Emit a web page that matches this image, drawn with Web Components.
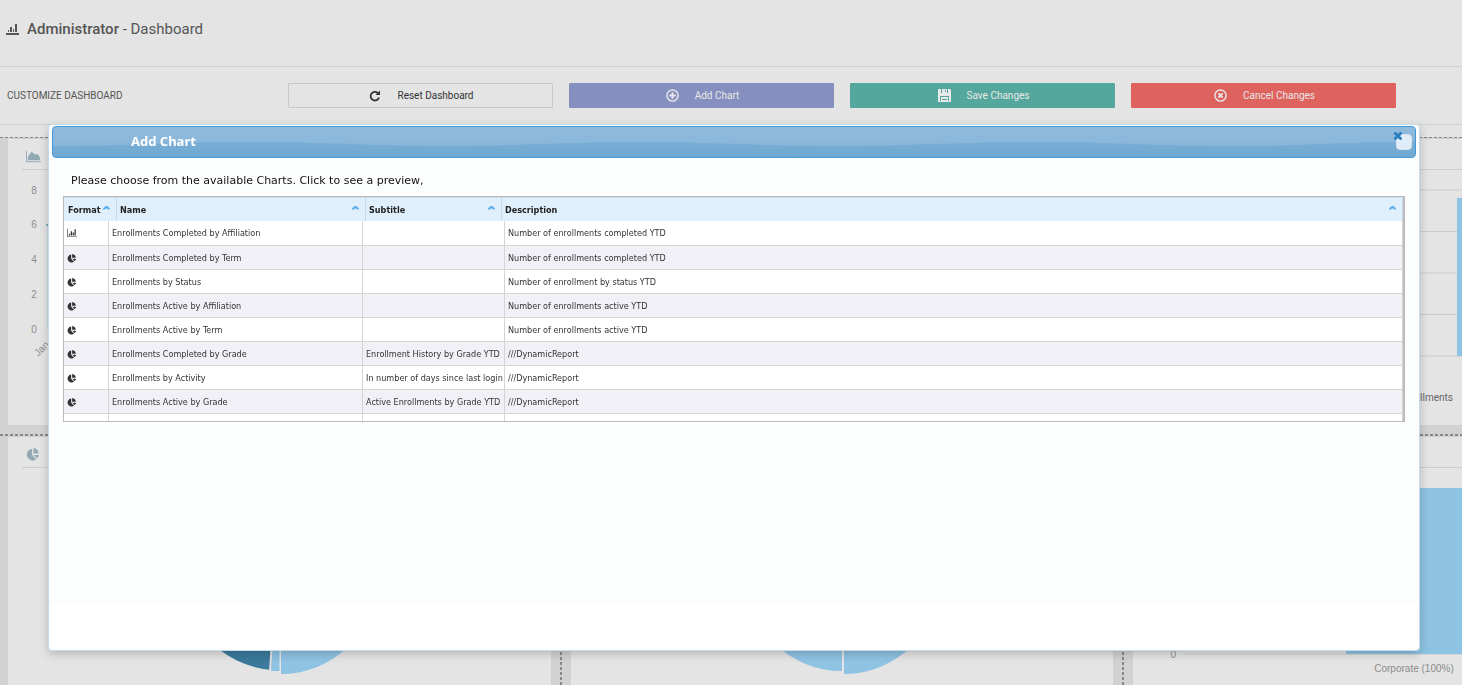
<!DOCTYPE html>
<html lang="en">
<head>
<meta charset="utf-8">
<title>Administrator - Dashboard</title>
<style>
  html, body { height: 100%; }
  body {
    margin: 0;
    overflow: hidden;
    background: #e4e4e4;
    color: #555;
    font-family: Roboto, Arial, sans-serif;
  }
</style>
</head>
<body>
<dashboard-page></dashboard-page>

<script>
// small icon set shared by all the elements
const ICONS = {
  bar: ['0 0 16 14', '<path d="M0 0h1v12h15v1H0zM3 8h2v3H3zM6 4h2v7H6zM9 6h2v5H9zM12 1h2v10h-2z"/>'],
  stats: ['0 0 13 11', '<path d="M0 9h13v2H0zM2 6h1v2H2zM4 3h2v5H4zM7 5h1v3H7zM9 0h2v8H9z"/>'],
  pie: ['0 0 14 14', '<path d="M6.500 .8v6.500l4.500 4.800A6.300 6.300 0 1 1 6.500 .8z"/><path d="M8 0a6.200 6.200 0 0 1 5.500 6H8z"/><path d="M8.500 7.500H14a6 6 0 0 1-2 3.800z"/>'],
  area: ['0 0 16 12', '<path d="M0 0h1v11h15v1H0z"/><path d="M2 10V6l4-5 4 3 2-1 3 4v3z"/>'],
  reset: ['0 0 12 12', '<path d="M10 7.500A4.300 4.300 0 1 1 8.800 3" fill="none" stroke="currentColor" stroke-width="1.800"/><path d="M11 0.500v4.500H6.500z"/>'],
  add: ['0 0 14 14', '<circle cx="7" cy="7" r="6" fill="none" stroke="currentColor" stroke-width="1.500"/><path d="M6 3.500h2V6h2.500v2H8v2.500H6V8H3.500V6H6z"/>'],
  save: ['0 0 13 13', '<path fill-rule="evenodd" d="M0 0H12L13 1V13H0zM3 0h1v4H3zM9 0h1v4H9zM7 1h1v2H7zM2 7h9v1H2zM2 8h1v4H2zM10 8h1v4h-1zM4 10h5v1H4z"/>'],
  cancel: ['0 0 14 14', '<circle cx="7" cy="7" r="6" fill="none" stroke="currentColor" stroke-width="1.500"/><path d="M4.800 4.800l4.400 4.400m0-4.400l-4.400 4.400" stroke="currentColor" stroke-width="2"/>'],
  sort: ['0 0 7 4', '<path d="M0 4V3l2-2 1-.5h1L5 1l2 2v1H5L4 3H3L2 4z"/>'],
  close: ['0 0 8 8', '<path d="M0 1l1-1h1l2 2 2-2h1l1 1v1L6 4l2 2v1L7 8H6L4 6 2 8H1L0 7V6l2-2-2-2z"/>']
};

class UiIcon extends HTMLElement {
  constructor() {
    super();
    this.attachShadow({ mode: 'open' });
  }

  connectedCallback() {
    const [box, body] = ICONS[this.getAttribute('name')];
    const size = this.getAttribute('size') || 12;
    this.shadowRoot.innerHTML = `
      <style>
        :host { display: inline-flex; flex: none; vertical-align: middle; }
        svg { display: block; fill: currentColor; }
      </style>
      <svg viewBox="${box}" width="${size}" height="${size}" aria-hidden="true">${body}</svg>`;
  }
}
customElements.define('ui-icon', UiIcon);

class PageHeader extends HTMLElement {
  constructor() {
    super();
    this.attachShadow({ mode: 'open' }).innerHTML = `
      <style>
        :host { display: block; border-bottom: 1px solid #cfcfcf; }
        header { display: flex; align-items: center; gap: 8px; height: 58px; padding: 0 6px 8px; }
        h1 { margin: 0; font-size: 15px; line-height: 20px; font-weight: 400; color: #555; }
      </style>
      <header><ui-icon name="stats" size="13"></ui-icon><h1><slot></slot></h1></header>`;
  }
}
customElements.define('page-header', PageHeader);

class ToolButton extends HTMLElement {
  constructor() {
    super();
    this.attachShadow({ mode: 'open' });
  }

  connectedCallback() {
    this.shadowRoot.innerHTML = `
      <style>
        :host { display: block; }
        button {
          display: flex;
          align-items: center;
          justify-content: center;
          gap: 16px;
          width: 100%;
          height: 25px;
          padding: 0 0 0 2px;
          border: 1px solid var(--edge, transparent);
          border-radius: 1px;
          background: var(--fill, transparent);
          color: var(--ink, #e8e8e8);
          font: 10px Roboto, Arial, sans-serif;
          cursor: pointer;
        }
        :host([kind=add]) { --fill: #8690c0; --edge: #8690c0; }
        :host([kind=save]) { --fill: #54a79d; --edge: #54a79d; }
        :host([kind=cancel]) { --fill: #de625e; --edge: #de625e; }
        :host([kind=reset]) { --edge: #c9c9c9; --ink: #333; }
      </style>
      <button type="button"><ui-icon name="${this.getAttribute('kind')}" size="${this.getAttribute('icon-size') || 13}"></ui-icon><slot></slot></button>`;
  }
}
customElements.define('tool-button', ToolButton);

class ToolBar extends HTMLElement {
  constructor() {
    super();
    this.attachShadow({ mode: 'open' }).innerHTML = `
      <style>
        :host {
          display: grid;
          grid-template-columns: repeat(5, 1fr);
          gap: 16px;
          align-items: center;
          padding: 16px 66px 16px 7px;
          border-bottom: 1px solid #cfcfcf;
        }
        span { font-size: 10px; color: #555; }
      </style>
      <span><slot name="label"></slot></span>
      <slot></slot>`;
  }
}
customElements.define('tool-bar', ToolBar);

class ChartCard extends HTMLElement {
  constructor() {
    super();
    this.attachShadow({ mode: 'open' });
  }

  connectedCallback() {
    const icon = this.getAttribute('icon');
    this.shadowRoot.innerHTML = `
      <style>
        :host { display: block; background: #e4e4e4; overflow: hidden; }
        .head {
          display: flex;
          align-items: center;
          height: 26px;
          margin-left: 14px;
          padding: 4px 4px 0;
          border-bottom: 1px solid #cdcdcd;
          color: #93aab5;
        }
      </style>
      <div class="head">${icon ? `<ui-icon name="${icon}" size="${icon === 'area' ? 15 : 13}"></ui-icon>` : ''}</div>
      <slot></slot>`;
  }
}
customElements.define('chart-card', ChartCard);

const PLOTS = {
  line: `
    <svg viewBox="0 0 543 255" width="543" height="255">
      <g text-anchor="middle">
        <text x="26" y="24">8</text><text x="26" y="58">6</text><text x="26" y="93">4</text>
        <text x="26" y="128">2</text><text x="26" y="163">0</text>
        <text transform="translate(36 181) rotate(-45)">Jan</text>
      </g>
      <path d="M40 54V159" stroke="#b0cfe2"/>
      <circle cx="39" cy="55" r="1" fill="#5b9bab"/>
    </svg>`,
  area: `
    <svg viewBox="0 0 543 255" width="543" height="255">
      <path d="M52 20H543M52 103H543M52 186H543" stroke="#d8d8d8" stroke-width="2"/>
      <path d="M52 61.500H543M52 144.500H543" stroke="#cbcbcb"/>
      <rect x="324" y="28" width="180" height="158" fill="#8ec3e4"/>
      <text x="320" y="231" text-anchor="end" class="key">Enrollments</text>
    </svg>`,
  pieSplit: `
    <svg viewBox="0 0 543 230" width="543" height="230">
      <path d="M270.500 106L264 202A96 96 0 0 1 175 106z" fill="#3b7a9c"/>
      <path d="M271.500 106V203H263L268 106z" fill="#8ec3e4"/>
      <path d="M273 14A96 96 0 0 1 273 206z" fill="#8ec3e4"/>
      <path d="M268 106L262 204" stroke="#e4e4e4" stroke-width="2"/>
    </svg>`,
  pie: `
    <svg viewBox="0 0 542 230" width="542" height="230">
      <path d="M271 10A96 96 0 0 0 271 203z" fill="#8ec3e4"/>
      <path d="M273 14A96 96 0 0 1 273 206z" fill="#8ec3e4"/>
    </svg>`,
  column: `
    <svg viewBox="0 0 543 230" width="543" height="230">
      <path d="M52 186H543" stroke="#d8d8d8" stroke-width="2"/>
      <rect x="213" y="20" width="160" height="166" fill="#8ec3e4"/>
      <text x="43" y="190" text-anchor="end">0</text>
      <text x="281" y="204" text-anchor="middle">Corporate (100%)</text>
    </svg>`
};

class ChartPlot extends HTMLElement {
  constructor() {
    super();
    this.attachShadow({ mode: 'open' });
  }

  connectedCallback() {
    this.shadowRoot.innerHTML = `
      <style>
        :host { display: block; }
        svg { display: block; }
        text { font: 10px "Liberation Sans", Arial, sans-serif; fill: #8c8c8c; }
        .key { font-family: Roboto, sans-serif; fill: #666; }
      </style>${PLOTS[this.getAttribute('type')]}`;
  }
}
customElements.define('chart-plot', ChartPlot);

class ChartBoard extends HTMLElement {
  constructor() {
    super();
    this.attachShadow({ mode: 'open' }).innerHTML = `
      <style>
        :host {
          display: grid;
          grid-template-columns: 8px minmax(543px, 37vw) 20px minmax(542px, 37vw) 20px minmax(543px, 37vw);
          grid-template-rows: 286px 12px 261px;
          margin-top: 12px;
          padding-top: 1px;
          border-top: 1px dashed #888;
          background: #d2d2d2;
        }
        .across { grid-column: 1 / -1; display: flex; align-items: flex-end; padding-bottom: 1px; }
        .across i { flex: 1; height: 2px; background: repeating-linear-gradient(90deg, #888 0 3px, transparent 3px 5px); }
        .down { display: flex; justify-content: center; }
        .down i { width: 2px; background: repeating-linear-gradient(#888 0 3px, transparent 3px 5px); }
      </style>
      <div></div>
      <slot name="a1"></slot><div class="down"><i></i></div>
      <slot name="a2"></slot><div class="down"><i></i></div>
      <slot name="a3"></slot>
      <div class="across"><i></i></div>
      <div></div>
      <slot name="b1"></slot><div class="down"><i></i></div>
      <slot name="b2"></slot><div class="down"><i></i></div>
      <slot name="b3"></slot>`;
  }
}
customElements.define('chart-board', ChartBoard);

class ChartTable extends HTMLElement {
  constructor() {
    super();
    this.attachShadow({ mode: 'open' });
    this.rows = [
      ['bar', 'Enrollments Completed by Affiliation', '', 'Number of enrollments completed YTD'],
      ['pie', 'Enrollments Completed by Term', '', 'Number of enrollments completed YTD'],
      ['pie', 'Enrollments by Status', '', 'Number of enrollment by status YTD'],
      ['pie', 'Enrollments Active by Affiliation', '', 'Number of enrollments active YTD'],
      ['pie', 'Enrollments Active by Term', '', 'Number of enrollments active YTD'],
      ['pie', 'Enrollments Completed by Grade', 'Enrollment History by Grade YTD', '///DynamicReport'],
      ['pie', 'Enrollments by Activity', 'In number of days since last login', '///DynamicReport'],
      ['pie', 'Enrollments Active by Grade', 'Active Enrollments by Grade YTD', '///DynamicReport']
    ];
  }

  connectedCallback() {
    const heads = ['Format', 'Name', 'Subtitle', 'Description'];
    this.shadowRoot.innerHTML = `
      <style>
        :host {
          display: block;
          border: 1px solid #bbb;
          border-right-width: 2px;
          background: #fff;
          color: #333;
          font: 9px/12px "DejaVu Sans Condensed", Tahoma, sans-serif;
        }
        table { width: 100%; table-layout: fixed; border-collapse: separate; border-spacing: 0; }
        th, td { box-sizing: border-box; height: 24px; padding: 0 3px; text-align: left; white-space: nowrap; }
        th { border-right: 1px solid #c5dbec; border-top: 1px solid #c5dbec; background: #dfeffc; }
        th button {
          display: flex;
          justify-content: space-between;
          align-items: center;
          width: 100%;
          padding: 0 3px 0 0;
          border: 0;
          background: none;
          color: #222;
          font: inherit;
        }
        th ui-icon { color: #5fb0e8; margin-bottom: 4px; }
        th:first-child { padding-left: 4px; }
        td { border-right: 1px solid #d5d5d5; border-bottom: 1px solid #d5d5d5; }
        tbody tr:first-child td { height: 25px; padding-bottom: 1px; }
        tbody tr:nth-child(even) td { background: #f1f0f6; }
        /* shows eight rows and the top of the next */
        .scroll { height: 200px; overflow: hidden; }
      </style>
      <table>
        <colgroup><col style="width:53px"><col style="width:249px"><col style="width:136px"><col></colgroup>
        <thead><tr>${heads.map(h => `<th scope="col"><button type="button">${h}<ui-icon name="sort" size="7"></ui-icon></button></th>`).join('')}</tr></thead>
      </table>
      <div class="scroll">
        <table>
          <colgroup><col style="width:45px"><col style="width:254px"><col style="width:142px"><col></colgroup>
          <tbody>
            ${this.rows.map(([icon, ...cells]) => `<tr><td><ui-icon name="${icon}" size="${icon === 'bar' ? 10 : 9}"></ui-icon></td>${cells.map(c => `<td>${c}</td>`).join('')}</tr>`).join('')}
            <tr><td></td><td></td><td></td><td></td></tr>
          </tbody>
        </table>
      </div>`;
  }
}
customElements.define('chart-table', ChartTable);

class ModalDialog extends HTMLElement {
  constructor() {
    super();
    this.attachShadow({ mode: 'open' }).innerHTML = `
      <style>
        :host { display: contents; }
        dialog {
          position: fixed;
          inset: 124px 42px auto 48px;
          box-sizing: border-box;
          width: auto;
          max-width: none;
          min-height: 527px;
          margin: 0;
          padding: 1px 3px;
          border: 1px solid #c5dbec;
          border-radius: 4px;
          background: linear-gradient(#fcfefd 0 478px, #fff 478px);
          box-shadow: 0 3px 10px rgba(0, 0, 0, .2);
          color: #111;
          font-family: "DejaVu Sans", "Lucida Grande", sans-serif;
        }
        header {
          position: relative;
          display: flex;
          align-items: center;
          justify-content: space-between;
          height: 30px;
          padding: 0 3px 0 78px;
          border: 1px solid #4297d7;
          border-radius: 4px;
          overflow: hidden;
          background: linear-gradient(#90bbdd, #84b3d8);
        }
        .wave { position: absolute; inset: 0; width: 100%; height: 100%; }
        h2 { position: relative; margin: 0; padding-bottom: 2px; font: bold 13px/16px "Noto Sans", sans-serif; color: #fff; }
        button {
          position: relative;
          width: 16px;
          height: 16px;
          padding: 0;
          border: 1px solid #d5e3ee;
          border-radius: 4px;
          background: #e0edf8;
          color: #2a7fc0;
        }
        button ui-icon { position: absolute; left: -3px; top: -3px; }
        .body { padding: 16px 11px 0; }
      </style>
      <dialog open aria-labelledby="title">
        <header>
          <svg class="wave" viewBox="0 0 1362 30" preserveAspectRatio="none" aria-hidden="true">
            <defs><linearGradient id="g" x1="0" y1="0" x2="0" y2="1"><stop offset="0" stop-color="#78add5"/><stop offset="1" stop-color="#70a8d1"/></linearGradient></defs>
            <path fill="url(#g)" d="M0 19C75 19 121 15 196 15S317 19 392 19 513 15 588 15 709 19 784 19 905 15 980 15 1101 19 1177 19 1287 15 1362 15V30H0z"/>
          </svg>
          <h2 id="title"><slot name="title"></slot></h2>
          <button type="button" aria-label="Close"><ui-icon name="close" size="8"></ui-icon></button>
        </header>
        <div class="body"><slot></slot></div>
      </dialog>`;
  }
}
customElements.define('modal-dialog', ModalDialog);

class DashboardPage extends HTMLElement {
  constructor() {
    super();
    this.attachShadow({ mode: 'open' }).innerHTML = `
      <style>
        :host { display: block; height: 100%; overflow: hidden; }
        b { font-weight: 500; }
        p { margin: 0; padding: 0 8px 8px; font-size: 11px; line-height: 14px; }
      </style>
      <page-header><b>Administrator</b> - Dashboard</page-header>
      <tool-bar>
        <span slot="label">CUSTOMIZE DASHBOARD</span>
        <tool-button kind="reset" icon-size="12">Reset Dashboard</tool-button>
        <tool-button kind="add">Add Chart</tool-button>
        <tool-button kind="save">Save Changes</tool-button>
        <tool-button kind="cancel">Cancel Changes</tool-button>
      </tool-bar>
      <chart-board>
        <chart-card slot="a1" icon="area"><chart-plot type="line"></chart-plot></chart-card>
        <chart-card slot="a2"></chart-card>
        <chart-card slot="a3"><chart-plot type="area"></chart-plot></chart-card>
        <chart-card slot="b1" icon="pie"><chart-plot type="pieSplit"></chart-plot></chart-card>
        <chart-card slot="b2"><chart-plot type="pie"></chart-plot></chart-card>
        <chart-card slot="b3"><chart-plot type="column"></chart-plot></chart-card>
      </chart-board>
      <modal-dialog>
        <span slot="title">Add Chart</span>
        <p>Please choose from the available Charts. Click to see a preview,</p>
        <chart-table></chart-table>
      </modal-dialog>`;
  }
}
customElements.define('dashboard-page', DashboardPage);
</script>
</body>
</html>
